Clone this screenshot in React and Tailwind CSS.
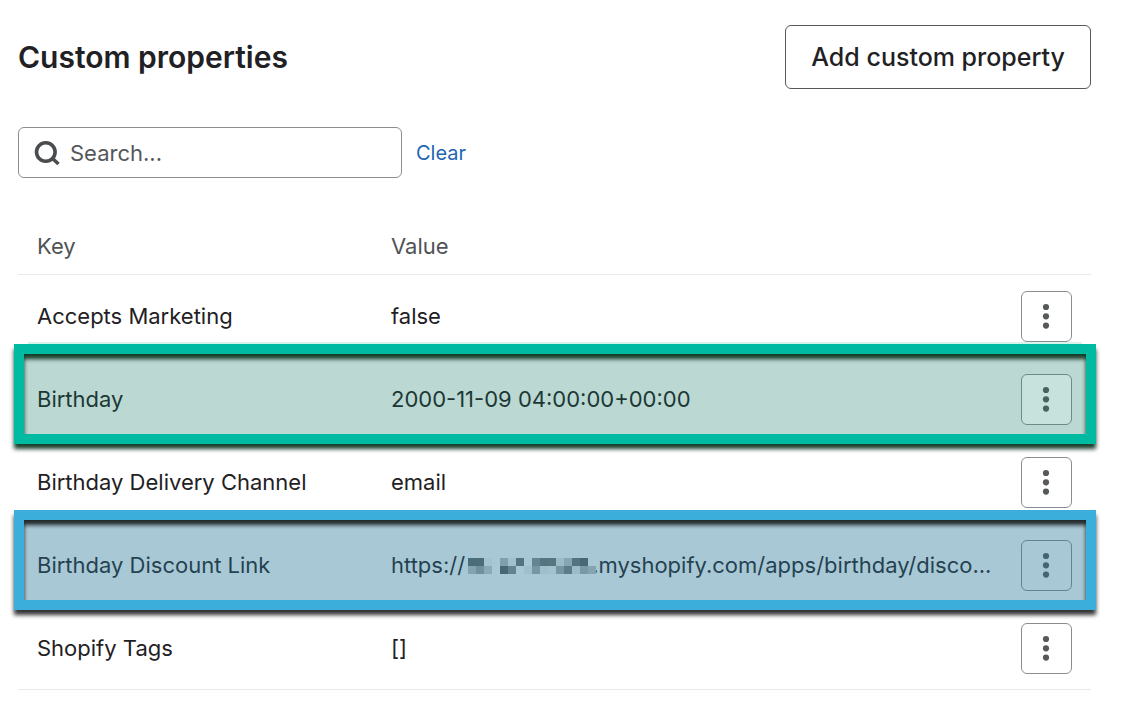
import React from 'react';

// ─── Data ───────────────────────────────────────────────────────────────────

const PROPERTIES = [
  { key: 'Accepts Marketing', value: 'false' },
  { key: 'Birthday', value: '2000-11-09 04:00:00+00:00', highlight: 'green' },
  { key: 'Birthday Delivery Channel', value: 'email' },
  { key: 'Birthday Discount Link', value: <DiscountLink />, highlight: 'blue' },
  { key: 'Shopify Tags', value: '[]' },
];

const HIGHLIGHTS = {
  green: {
    row: 'bg-[#f0f4f4]',
    tint: 'bg-[#13826e]/24',
    edge: 'bg-[#d8f3ec]',
    frame: 'border-[#00bba1] drop-shadow-[0_5px_2px_rgba(0,40,20,0.9)]',
  },
  blue: {
    row: '',
    tint: 'bg-[#287696]/40',
    edge: '',
    frame: 'border-[#3caedb] drop-shadow-[0_5px_2px_rgba(0,0,0,0.8)]',
  },
};

// 8px blocks that hide the store name
const MOSAIC = [
  ['#4b6c79', '#4b6c79', '#a3c4cf', null, '#809fae', '#9fc0cc', '#54737f', null, '#648491', '#54747f', '#567682', '#9bbbc9', '#86a6b3', '#54727f', '#486874', null],
  ['#84a3b0', '#7090a0', '#8baab8', null, '#476774', '#638390', null, '#9fbfcc', '#7797a4', '#9fbfcc', '#a2c2cd', '#7696a3', '#5c7c89', '#9bbbc8', '#7a98a5', '#84a4b0'],
];

// ─── Pieces ─────────────────────────────────────────────────────────────────

function DiscountLink() {
  return (
    <span className="flex items-center">
      https://
      <svg className="relative z-20 mt-0.5 -mr-1 ml-[3px] h-4 w-32 shrink-0" viewBox="0 0 128 16" shapeRendering="crispEdges" aria-hidden="true">
        {MOSAIC.map((line, y) =>
          line.map((fill, x) => fill && (
            <rect key={`${x}-${y}`} x={x * 8} y={y * 8} width="8" height="8" fill={fill} />
          ))
        )}
      </svg>
      .myshopify.com/apps/birthday/disco...
    </span>
  );
}

function SearchIcon() {
  return (
    <svg className="h-7 w-7 shrink-0" viewBox="0 0 28 28" fill="none" stroke="#4a4d4f" aria-hidden="true">
      <circle cx="11.8" cy="13" r="9.3" strokeWidth="3.6" />
      <path d="M18.5 19.5l6 5.5" strokeWidth="3.6" />
    </svg>
  );
}

function Highlight({ colors }) {
  return (
    <div className="pointer-events-none absolute -top-3.5 -right-[5px] -bottom-[3px] -left-1 z-10">
      <div className={`absolute inset-x-3.5 -top-0.5 h-0.5 ${colors.edge}`} />
      <div className={`absolute inset-2.5 ${colors.tint}`} />
      <div className={`absolute inset-0 border-10 ${colors.frame}`} />
    </div>
  );
}

function PropertyRow({ name, value, highlight }) {
  const colors = HIGHLIGHTS[highlight];

  return (
    <tr className={`relative h-[83px] ${colors ? colors.row : ''}`}>
      <td className="border-b border-[#e8eaea] pl-[19px]">{name}</td>
      <td className="border-b border-[#e8eaea] whitespace-nowrap">{value}</td>
      <td className="border-b border-[#e8eaea] pr-[19px] text-right">
        <button
          type="button"
          aria-label={`Options for ${name}`}
          className="inline-flex size-[51px] items-center justify-center rounded-md border border-[#8b8e90] bg-white align-middle"
        >
          <svg className="h-[27px] w-[9px]" viewBox="0 0 9 27" fill="#55595a" aria-hidden="true">
            <circle cx="4" cy="4" r="3.1" />
            <circle cx="4" cy="13.3" r="3.1" />
            <circle cx="4" cy="22.6" r="3.1" />
          </svg>
        </button>
        {colors && <Highlight colors={colors} />}
      </td>
    </tr>
  );
}

// ─── Page ───────────────────────────────────────────────────────────────────

export default function App() {
  return (
    <main className="min-h-screen bg-white pt-[25px] pr-[37px] pb-7 pl-[18px] font-['Inter',sans-serif] text-[22px] leading-7 text-[#1f2124]">
      <header className="flex items-center justify-between">
        <h1 className="text-[30px] leading-10 font-semibold">Custom properties</h1>
        <button type="button" className="h-16 rounded-md border border-[#55595c] px-[25px] text-[25px] font-medium">
          Add custom property
        </button>
      </header>

      <div className="mt-[38px] flex items-center gap-3.5">
        <label className="flex h-[51px] w-96 items-center gap-2 rounded-md border border-[#8b8e90] pr-3 pl-[15px]">
          <SearchIcon />
          <input
            type="text"
            aria-label="Search properties"
            placeholder="Search..."
            className="min-w-0 flex-1 outline-none placeholder:text-[#55585a]"
          />
        </label>
        <a href="#clear" className="text-xl text-[#1d66b0]">Clear</a>
      </div>

      <table className="mt-[39px] w-full table-fixed border-separate border-spacing-0 text-left">
        <thead>
          <tr className="h-[58px] text-[#505355]">
            <th className="w-[373px] border-b border-[#e8eaea] pl-[19px] font-normal">Key</th>
            <th className="border-b border-[#e8eaea] font-normal">Value</th>
            <th className="w-[90px] border-b border-[#e8eaea]" aria-label="Actions" />
          </tr>
        </thead>
        <tbody>
          {PROPERTIES.map((item) => (
            <PropertyRow key={item.key} name={item.key} value={item.value} highlight={item.highlight} />
          ))}
        </tbody>
      </table>
    </main>
  );
}
